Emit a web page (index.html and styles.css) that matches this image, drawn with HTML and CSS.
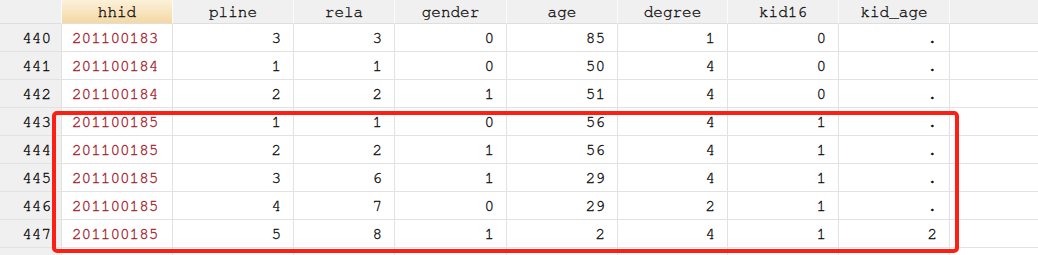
FILE: index.html
```html
<!DOCTYPE html>
<html>
<head>
<meta charset="utf-8">
<link rel="stylesheet" href="styles.css">
</head>
<body>
<div class="sheet">
  <div class="row head">
    <div class="cell corner"></div>
    <div class="cell hcell sel">hhid</div>
    <div class="cell hcell">pline</div>
    <div class="cell hcell">rela</div>
    <div class="cell hcell">gender</div>
    <div class="cell hcell">age</div>
    <div class="cell hcell">degree</div>
    <div class="cell hcell">kid16</div>
    <div class="cell hcell">kid_age</div>
    <div class="cell hfill"></div>
  </div>
  <div class="row"><div class="cell num">440</div><div class="cell str">201100183</div><div class="cell val">3</div><div class="cell val">3</div><div class="cell val">0</div><div class="cell val">85</div><div class="cell val">1</div><div class="cell val">0</div><div class="cell val">.</div><div class="cell fill"></div></div>
  <div class="row"><div class="cell num">441</div><div class="cell str">201100184</div><div class="cell val">1</div><div class="cell val">1</div><div class="cell val">0</div><div class="cell val">50</div><div class="cell val">4</div><div class="cell val">0</div><div class="cell val">.</div><div class="cell fill"></div></div>
  <div class="row"><div class="cell num">442</div><div class="cell str">201100184</div><div class="cell val">2</div><div class="cell val">2</div><div class="cell val">1</div><div class="cell val">51</div><div class="cell val">4</div><div class="cell val">0</div><div class="cell val">.</div><div class="cell fill"></div></div>
  <div class="row"><div class="cell num">443</div><div class="cell str">201100185</div><div class="cell val">1</div><div class="cell val">1</div><div class="cell val">0</div><div class="cell val">56</div><div class="cell val">4</div><div class="cell val">1</div><div class="cell val">.</div><div class="cell fill"></div></div>
  <div class="row"><div class="cell num">444</div><div class="cell str">201100185</div><div class="cell val">2</div><div class="cell val">2</div><div class="cell val">1</div><div class="cell val">56</div><div class="cell val">4</div><div class="cell val">1</div><div class="cell val">.</div><div class="cell fill"></div></div>
  <div class="row"><div class="cell num">445</div><div class="cell str">201100185</div><div class="cell val">3</div><div class="cell val">6</div><div class="cell val">1</div><div class="cell val">29</div><div class="cell val">4</div><div class="cell val">1</div><div class="cell val">.</div><div class="cell fill"></div></div>
  <div class="row"><div class="cell num">446</div><div class="cell str">201100185</div><div class="cell val">4</div><div class="cell val">7</div><div class="cell val">0</div><div class="cell val">29</div><div class="cell val">2</div><div class="cell val">1</div><div class="cell val">.</div><div class="cell fill"></div></div>
  <div class="row"><div class="cell num">447</div><div class="cell str">201100185</div><div class="cell val">5</div><div class="cell val">8</div><div class="cell val">1</div><div class="cell val">2</div><div class="cell val">4</div><div class="cell val">1</div><div class="cell val">2</div><div class="cell fill"></div></div>
  <div class="row"><div class="cell num"></div><div class="cell str"></div><div class="cell val"></div><div class="cell val"></div><div class="cell val"></div><div class="cell val"></div><div class="cell val"></div><div class="cell val"></div><div class="cell val"></div><div class="cell fill"></div></div>
  <div class="highlight"></div>
</div>
</body>
</html>
```
FILE: styles.css
```css
html, body {
  margin: 0;
  padding: 0;
  background: #ffffff;
  overflow: hidden;
}
.sheet {
  position: relative;
  width: 1038px;
  height: 255px;
  overflow: hidden;
  font-family: "Nimbus Mono PS", "FreeMono", "Liberation Mono", "Courier New", monospace;
  font-size: 16px;
  color: #111111;
  -webkit-text-stroke: 0.35px currentColor;
}
.row {
  display: grid;
  grid-template-columns: 62px 111px 121px 101px 112px 111px 110px 111px 111px 1fr;
  height: 28px;
}
.row.head {
  height: 24px;
}
.cell {
  box-sizing: border-box;
  border-right: 1px solid #e2e2e2;
  border-bottom: 1px solid #e2e2e2;
  display: flex;
  align-items: center;
  white-space: nowrap;
  line-height: 1;
}
.head .cell {
  background: #f0f0f0;
  border-right: 1px solid #fbfbfb;
  border-bottom: 1px solid #dedede;
  justify-content: center;
}
.head .cell.sel {
  background: linear-gradient(#fcf1da, #f4d8a4);
}
.head .hfill {
  border-right: none;
}
.num {
  background: #f0f0f0;
  justify-content: flex-end;
  padding-right: 10px;
  color: #0a0a0a;
}
.str {
  color: #a3232e;
  padding-left: 10px;
}
.val {
  justify-content: flex-end;
  padding-right: 12px;
}
.fill {
  border-right: none;
}
.highlight {
  position: absolute;
  left: 52px;
  top: 111px;
  width: 907px;
  height: 142px;
  box-sizing: border-box;
  border: 4px solid #fd1e14;
  border-radius: 5px;
}
```
